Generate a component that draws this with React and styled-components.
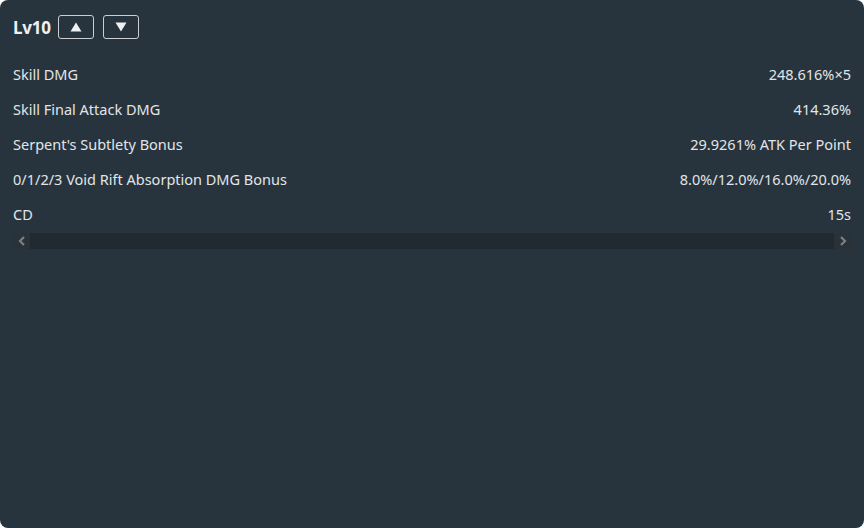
import React from "react";
import styled, { createGlobalStyle } from "styled-components";

const Global = createGlobalStyle`
  html, body { margin: 0; padding: 0; background: #ffffff; }
  body { font-family: "Segoe UI", "Noto Sans", "Open Sans", sans-serif; }
  * { box-sizing: border-box; }
`;

const Panel = styled.div`
  width: 864px;
  height: 528px;
  background: #27343e;
  border-radius: 8px;
  padding: 15px 13px 0 13px;
  color: #e4e7ea;
  display: flex;
  flex-direction: column;
`;

const Header = styled.div`
  display: flex;
  align-items: center;
  gap: 9px;
  height: 24px;
`;

const Level = styled.span`
  font-size: 17px;
  font-weight: 700;
  color: #eef0f2;
  margin-right: -2px;
  letter-spacing: -0.2px;
`;

const StepButton = styled.button`
  width: 36px;
  height: 24px;
  border: 1px solid #c9ced2;
  border-radius: 3px;
  background: transparent;
  display: flex;
  align-items: center;
  justify-content: center;
  padding: 0;
  cursor: pointer;
`;

const Rows = styled.div`
  display: flex;
  flex-direction: column;
  margin-top: 17px;
`;

const Row = styled.div`
  display: flex;
  justify-content: space-between;
  align-items: center;
  height: 35px;
  font-size: 14.5px;
  color: #e2e5e8;
`;

const Scrollbar = styled.div`
  display: flex;
  height: 16px;
  background: #212a31;
  margin-top: 2px;
`;

const ScrollArrow = styled.div`
  width: 17px;
  height: 16px;
  background: #2a3137;
  display: flex;
  align-items: center;
  justify-content: center;
`;

const Track = styled.div`
  flex: 1;
`;

const Tri = ({ up }) => (
  <svg width="12" height="10" viewBox="0 0 12 10">
    {up ? (
      <polygon points="6,0.5 11.5,9.5 0.5,9.5" fill="#eef0f2" />
    ) : (
      <polygon points="0.5,0.5 11.5,0.5 6,9.5" fill="#eef0f2" />
    )}
  </svg>
);

const Chevron = ({ left }) => (
  <svg width="8" height="10" viewBox="0 0 8 10">
    <polyline
      points={left ? "6,1 2,5 6,9" : "2,1 6,5 2,9"}
      fill="none"
      stroke="#7a8186"
      strokeWidth="2.2"
    />
  </svg>
);

const data = [
  ["Skill DMG", "248.616%×5"],
  ["Skill Final Attack DMG", "414.36%"],
  ["Serpent's Subtlety Bonus", "29.9261% ATK Per Point"],
  ["0/1/2/3 Void Rift Absorption DMG Bonus", "8.0%/12.0%/16.0%/20.0%"],
  ["CD", "15s"],
];

export default function App() {
  return (
    <>
      <Global />
      <Panel>
        <Header>
          <Level>Lv10</Level>
          <StepButton aria-label="up">
            <Tri up />
          </StepButton>
          <StepButton aria-label="down">
            <Tri />
          </StepButton>
        </Header>
        <Rows>
          {data.map(([k, v]) => (
            <Row key={k}>
              <span>{k}</span>
              <span>{v}</span>
            </Row>
          ))}
        </Rows>
        <Scrollbar>
          <ScrollArrow>
            <Chevron left />
          </ScrollArrow>
          <Track />
          <ScrollArrow>
            <Chevron />
          </ScrollArrow>
        </Scrollbar>
      </Panel>
    </>
  );
}
